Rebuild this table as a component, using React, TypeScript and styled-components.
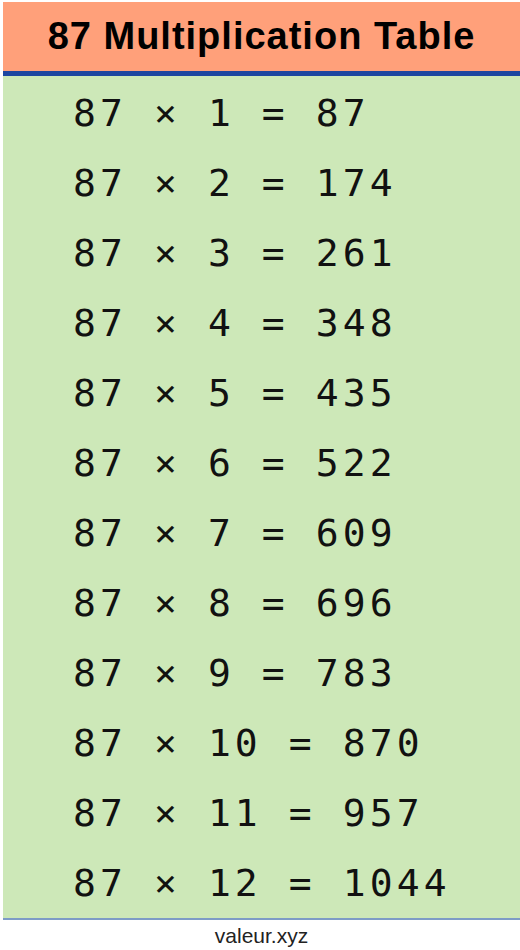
import styled, { createGlobalStyle } from "styled-components";

const GlobalStyle = createGlobalStyle`
  body {
    margin: 0;
    background: #ffffff;
    font-family: "Liberation Sans", Arial, sans-serif;
  }
`;

const Page = styled.div`
  padding: 2px 0 0 3px;
  width: 517px;
`;

const Header = styled.div`
  background: #ffa07a;
  height: 69px;
  display: flex;
  align-items: center;
  justify-content: center;
  border-bottom: 5px solid #1d46a0;
`;

const Title = styled.h1`
  margin: 0;
  font-family: "Liberation Sans", Arial, sans-serif;
  font-size: 38px;
  letter-spacing: 1px;
  font-weight: bold;
  color: #000000;
`;

const Table = styled.div`
  background: #cde8b8;
  border-bottom: 2px solid #7d9cc6;
  padding-top: 2px;
`;

const Row = styled.div`
  height: 70px;
  display: flex;
  align-items: center;
  padding-left: 70px;
  font-family: "DejaVu Sans Mono", "Liberation Mono", monospace;
  font-size: 38px;
  letter-spacing: 4.1px;
  color: #111111;
  white-space: pre;
`;

const Footer = styled.div`
  text-align: center;
  font-family: "Liberation Sans", Arial, sans-serif;
  font-size: 21px;
  color: #222222;
  padding-top: 4px;
`;

const base = 87;

export default function App() {
  const rows = Array.from({ length: 12 }, (_, i) => i + 1);
  return (
    <>
      <GlobalStyle />
      <Page>
        <Header>
          <Title>{base} Multiplication Table</Title>
        </Header>
        <Table>
          {rows.map((n) => (
            <Row key={n}>{`${base} × ${n} = ${base * n}`}</Row>
          ))}
        </Table>
        <Footer>valeur.xyz</Footer>
      </Page>
    </>
  );
}
